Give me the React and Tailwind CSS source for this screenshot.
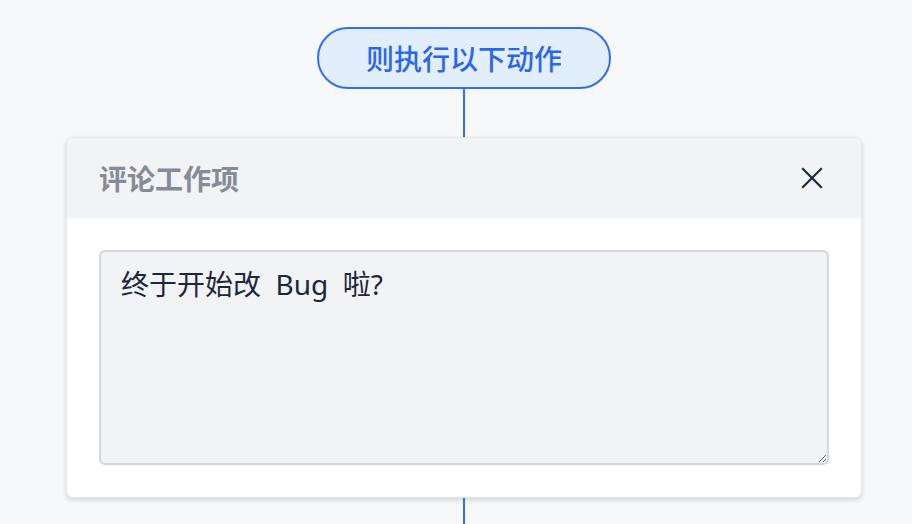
export default function App() {
  return (
    <div
      className="min-h-[524px] w-[912px] overflow-hidden bg-[#f7f8f9] pl-[16px] pt-[27px] flex flex-col items-center"
      style={{ fontFamily: '"Noto Sans CJK SC", "Noto Sans", sans-serif' }}
    >
      {/* trigger pill */}
      <div className="h-[62px] w-[294px] rounded-full border-2 border-[#2f6ef6] bg-[#e3eefd] flex items-center justify-center text-[28px] font-medium text-[#2b67ee]">
        则执行以下动作
      </div>
      <div className="h-[48px] w-[2px] bg-[#2f6ef6]" />

      {/* action card */}
      <div className="w-[796px] rounded-[7px] bg-white shadow-[0_2px_5px_rgba(15,23,42,0.16)] border border-[#e4e6ea]">
        <div className="h-[80px] rounded-t-[7px] bg-[#f2f3f5] flex items-center justify-between pl-[32px] pr-[38px]">
          <span className="text-[28px] font-bold text-[#858b99]">评论工作项</span>
          <svg width="22" height="22" viewBox="0 0 22 22" fill="none" stroke="#1e293b" strokeWidth="2.2" strokeLinecap="square">
            <path d="M2 2 L20 20 M20 2 L2 20" />
          </svg>
        </div>
        <div className="p-[32px]">
          <textarea
            className="block h-[215px] w-full rounded-[6px] border-2 border-[#d4d6dd] bg-[#f2f3f5] px-[20px] py-[14px] text-[28px] leading-[36px] text-[#1b2640] outline-none"
            style={{ fontFamily: '"Noto Sans", "Noto Sans CJK SC", sans-serif' }}
            defaultValue="终于开始改  Bug  啦?"
          />
        </div>
      </div>
      <div className="h-[40px] w-[2px] bg-[#2f6ef6]" />
    </div>
  );
}
